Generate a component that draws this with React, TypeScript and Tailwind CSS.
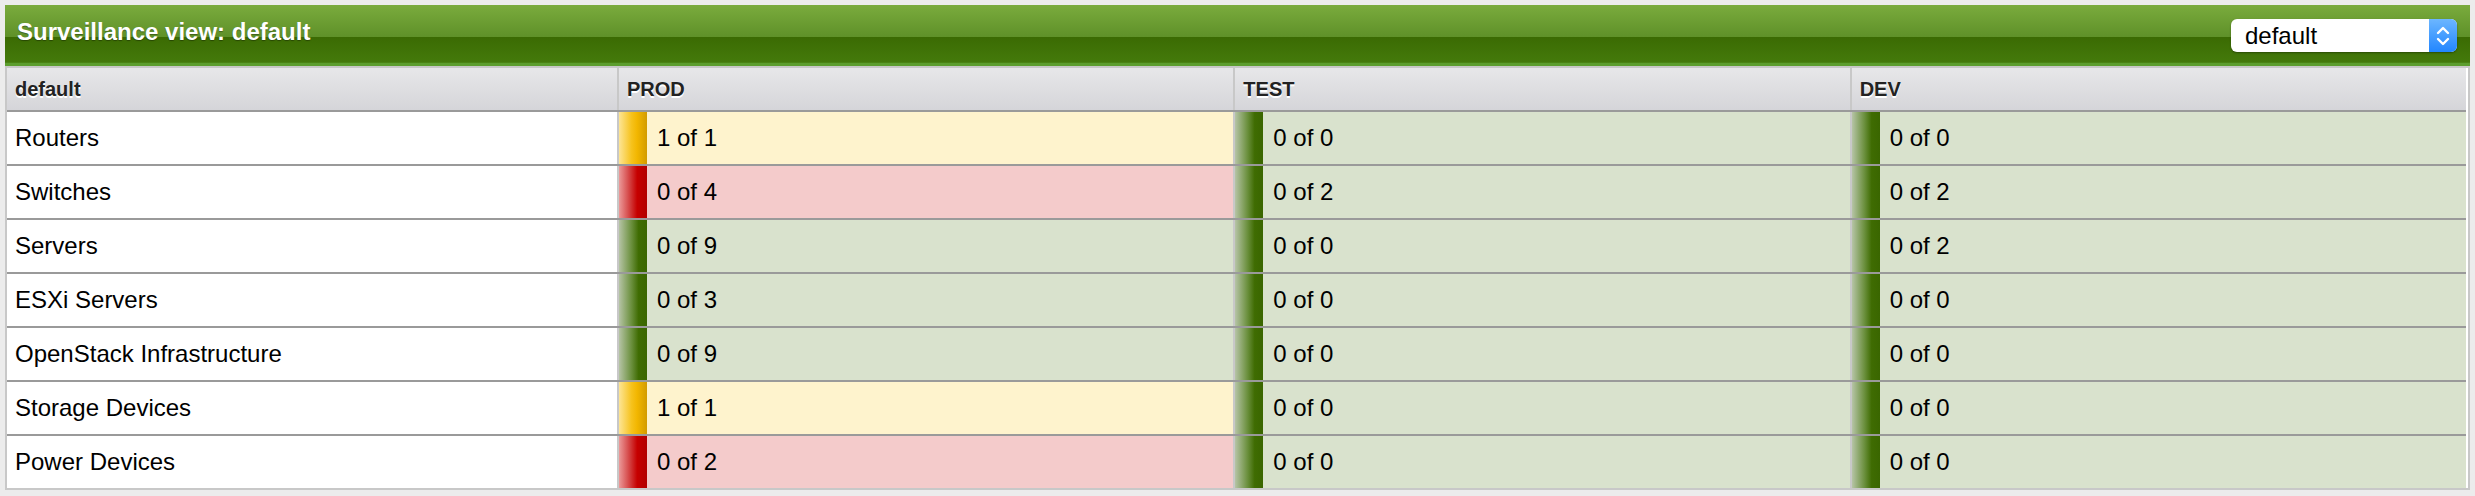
import React from "react";

type Status = "ok" | "warn" | "crit";

interface Cell {
  status: Status;
  text: string;
}

interface Row {
  name: string;
  cells: Cell[];
}

const ok = (text: string): Cell => ({ status: "ok", text });
const warn = (text: string): Cell => ({ status: "warn", text });
const crit = (text: string): Cell => ({ status: "crit", text });

const columns = ["PROD", "TEST", "DEV"];

const rows: Row[] = [
  { name: "Routers", cells: [warn("1 of 1"), ok("0 of 0"), ok("0 of 0")] },
  { name: "Switches", cells: [crit("0 of 4"), ok("0 of 2"), ok("0 of 2")] },
  { name: "Servers", cells: [ok("0 of 9"), ok("0 of 0"), ok("0 of 2")] },
  { name: "ESXi Servers", cells: [ok("0 of 3"), ok("0 of 0"), ok("0 of 0")] },
  { name: "OpenStack Infrastructure", cells: [ok("0 of 9"), ok("0 of 0"), ok("0 of 0")] },
  { name: "Storage Devices", cells: [warn("1 of 1"), ok("0 of 0"), ok("0 of 0")] },
  { name: "Power Devices", cells: [crit("0 of 2"), ok("0 of 0"), ok("0 of 0")] },
];

const cellBg: Record<Status, string> = {
  ok: "bg-[#d9e2cd]",
  warn: "bg-[#fef3cd]",
  crit: "bg-[#f4cbcb]",
};

const barBg: Record<Status, string> = {
  ok: "bg-[linear-gradient(to_right,#b6c4a6,#6a8f3c_45%,#3f6c02_70%,#3a6600)]",
  warn: "bg-[linear-gradient(to_right,#fde595,#f6c21c_45%,#f2b600_65%,#d29b00)]",
  crit: "bg-[linear-gradient(to_right,#eb9a9a,#d23c3c_40%,#c60000_65%,#b20000)]",
};

function StatusCell({ cell }: { cell: Cell }) {
  return (
    <div className={`flex items-stretch border-l-2 border-[#c8c8c8] ${cellBg[cell.status]}`}>
      <div className={`w-[28px] shrink-0 ${barBg[cell.status]}`} />
      <span className="flex items-center pl-[10px] text-[24px] text-black">{cell.text}</span>
    </div>
  );
}

function SelectBox() {
  return (
    <div className="flex h-[33px] w-[226px] items-stretch rounded-[6px] bg-white shadow-[0_1px_2px_rgba(0,0,0,0.35)]">
      <span className="flex flex-1 items-center pl-[14px] text-[24px] text-black">default</span>
      <div className="flex w-[28px] items-center justify-center rounded-r-[6px] bg-[linear-gradient(to_bottom,#6cb6ff,#2286ff)]">
        <svg width="16" height="24" viewBox="0 0 16 24" fill="none" stroke="white" strokeWidth="2.4" strokeLinecap="round" strokeLinejoin="round">
          <path d="M3 9 L8 4 L13 9" />
          <path d="M3 15 L8 20 L13 15" />
        </svg>
      </div>
    </div>
  );
}

export default function App() {
  return (
    <div className="h-[496px] w-[2475px] bg-[#ececec] p-[5px] font-['Liberation_Sans',Arial,sans-serif]">
      {/* Title bar */}
      <div className="flex h-[61px] items-center justify-between bg-[linear-gradient(to_bottom,#7aab3d_0%,#5f9129_52%,#3b6b03_53%,#447a0b_94%,#5c9e2e_95%,#5c9e2e_100%)] pl-[12px] pr-[13px]">
        <span className="mb-[7px] text-[24px] font-bold text-white [text-shadow:0_1px_1px_rgba(0,0,0,0.35)]">
          Surveillance view: default
        </span>
        <SelectBox />
      </div>

      {/* Table */}
      <div className="border-2 border-[#c8c8c8] bg-white pr-[2px]">
        <div className="grid h-[44px] grid-cols-[610px_1fr_1fr_1fr] border-b-2 border-[#9a9a9a] bg-[linear-gradient(to_bottom,#e7e7e9,#d5d5d9)]">
          <div className="flex items-center pl-[8px] text-[20px] font-bold text-[#222] [text-shadow:0_2px_0_#fff]">
            default
          </div>
          {columns.map((c) => (
            <div
              key={c}
              className="flex items-center border-l-2 border-[#c8c8c8] pl-[8px] text-[20px] font-bold text-[#222] [text-shadow:0_2px_0_#fff]"
            >
              {c}
            </div>
          ))}
        </div>

        {rows.map((r, i) => (
          <div
            key={r.name}
            className={`grid h-[52px] grid-cols-[610px_1fr_1fr_1fr] ${i > 0 ? "box-content border-t-2 border-[#9a9a9a]" : ""}`}
          >
            <div className="flex items-center bg-white pl-[8px] text-[24px] text-black">{r.name}</div>
            {r.cells.map((c, j) => (
              <StatusCell key={j} cell={c} />
            ))}
          </div>
        ))}
      </div>
    </div>
  );
}
